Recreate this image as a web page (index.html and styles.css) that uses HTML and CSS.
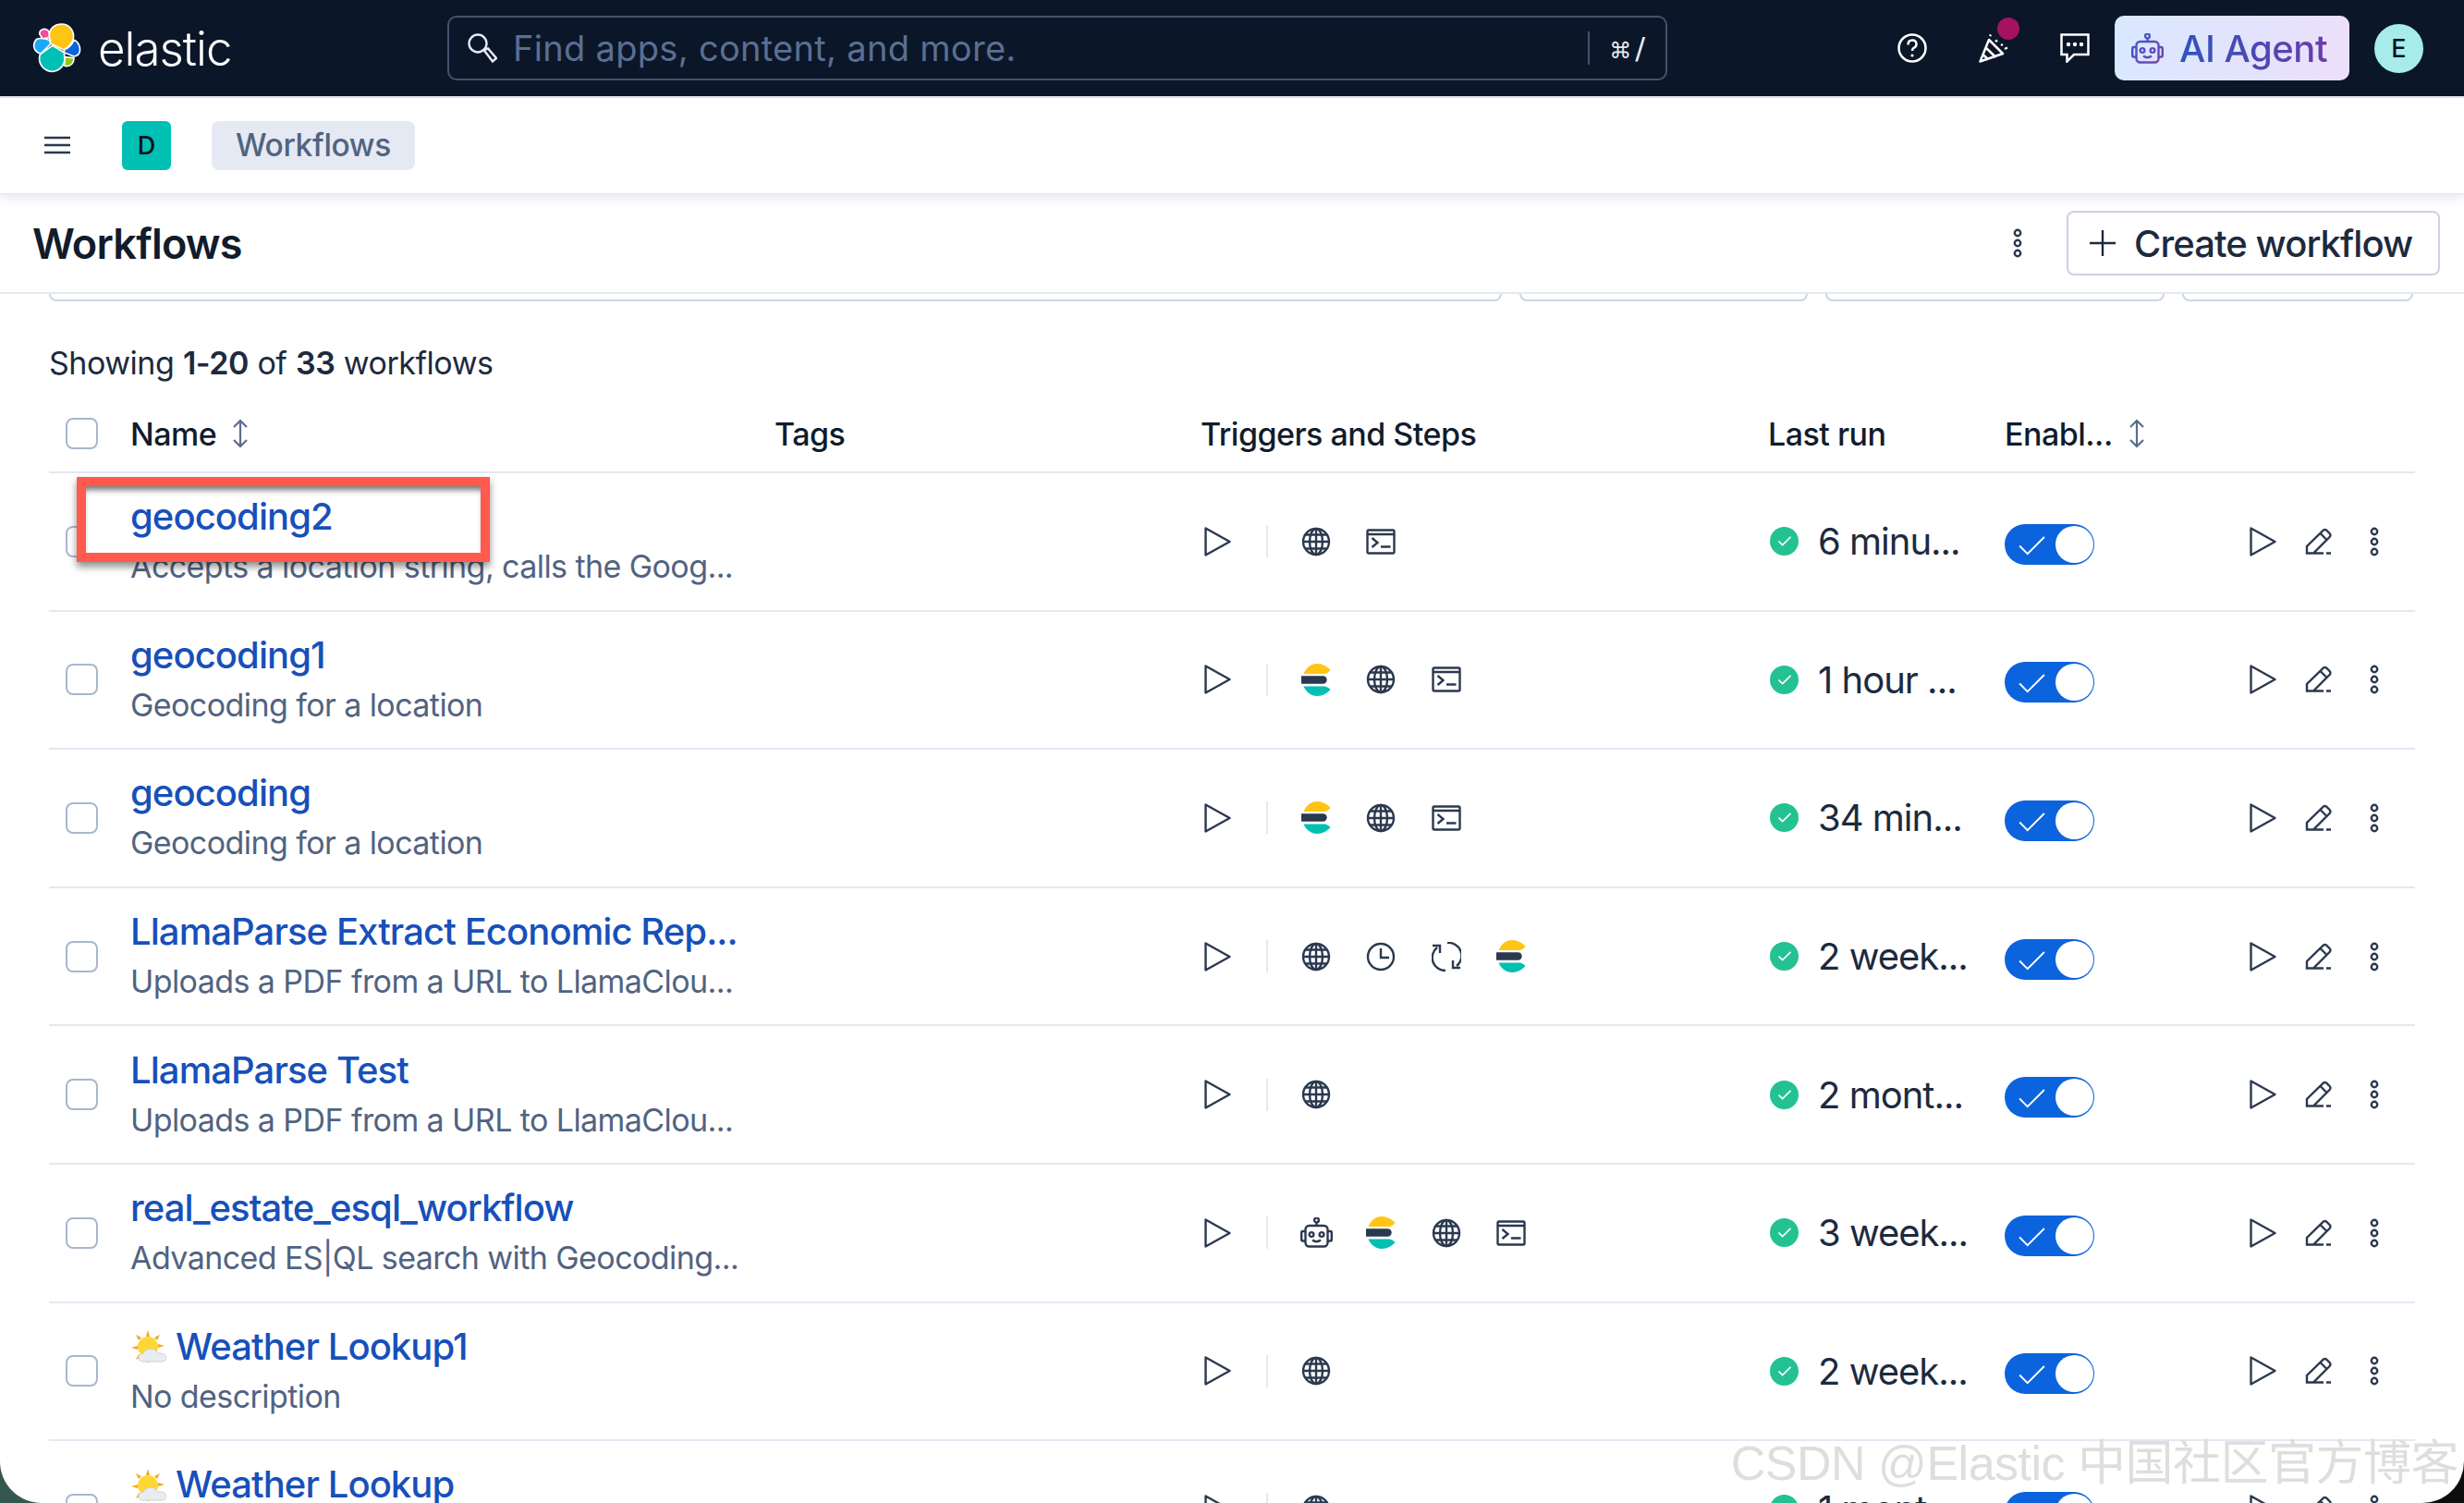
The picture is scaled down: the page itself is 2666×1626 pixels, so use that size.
FILE: index.html
```html
<!DOCTYPE html>
<html>
	<head>
		<meta charset="utf-8">
		<title>Workflows</title>
		<link rel="stylesheet" href="styles.css">
	</head>

	<body>
		<!-- shared icons -->
		<svg class="sprite" width="0" height="0">
			<defs>
				<linearGradient id="aiGrad" gradientUnits="userSpaceOnUse" x1="0" y1="0" x2="35" y2="33">
					<stop offset="0" stop-color="#3a5cc9"/>
					<stop offset="1" stop-color="#7b3fb0"/>
				</linearGradient>
			</defs>
			<symbol id="i-play" viewBox="0 0 32 32">
				<path d="M2.5 1.5 L28.5 16 L2.5 30.5 Z" stroke-linejoin="round"/>
			</symbol>
			<symbol id="i-globe" viewBox="0 0 32 32">
				<circle cx="16" cy="16" r="14"/>
				<ellipse cx="16" cy="16" rx="7" ry="14"/>
				<path d="M16 2 V30 M2 16 H30 M4.5 8.5 H27.5 M4.5 23.5 H27.5"/>
			</symbol>
			<symbol id="i-console" viewBox="0 0 32 32">
				<rect x="1.5" y="3.5" width="29" height="25" rx="1.5"/>
				<path d="M1.5 8 H30.5 M6.5 12 L12.5 17 L6.5 22 M16 21.5 H26.5"/>
			</symbol>
			<symbol id="i-clock" viewBox="0 0 32 32">
				<circle cx="16" cy="16" r="14"/>
				<path d="M16 7 V17 H25"/>
			</symbol>
			<symbol id="i-sync" viewBox="0 0 32 32">
				<path d="M15 31 A14 14 0 0 1 6 6 M1 4 H9 V12 M17 1 A14 14 0 0 1 27 26 M23 20 V28 H31"/>
			</symbol>
			<symbol id="i-robot" viewBox="0 0 35 33">
				<circle cx="17.5" cy="3" r="2.4"/>
				<path d="M17.5 5.5 V9"/>
				<rect x="5.5" y="9" width="24" height="22.5" rx="4"/>
				<path d="M5.5 15 H2.5 Q1.2 15 1.2 16.5 V24 Q1.2 25.5 2.5 25.5 H5.5 M29.5 15 H32.5 Q33.8 15 33.8 16.5 V24 Q33.8 25.5 32.5 25.5 H29.5"/>
				<circle cx="12" cy="18.5" r="2.4"/>
				<circle cx="23" cy="18.5" r="2.4"/>
				<path d="M13 24.5 Q17.5 28 22 24.5"/>
			</symbol>
			<symbol id="i-pen" viewBox="0 0 32 32">
				<path d="M3 28.5 V21 L21 3.5 Q22.5 2.5 24 3.5 L28 7.5 Q29 9 28 10.5 L10 28.5 Z M17.5 7 L24.5 14 M3 28.5 H21 M24 28.5 H29"/>
			</symbol>
			<symbol id="i-dots" viewBox="0 0 32 32">
				<circle cx="16" cy="5" r="3.2"/>
				<circle cx="16" cy="16" r="3.2"/>
				<circle cx="16" cy="27" r="3.2"/>
			</symbol>
			<symbol id="i-check" viewBox="0 0 30 22">
				<path d="M1 11 L10 20 L29 1"/>
			</symbol>
			<symbol id="i-sort" viewBox="0 0 20 32">
				<path d="M10 2 V30 M3 9 L10 2 L17 9 M3 23 L10 30 L17 23"/>
			</symbol>
			<symbol id="i-elastic" viewBox="0 0 32 35">
				<path class="fill-yellow" d="M2.5 11 C5 4.5 10.5 0 17 0 C23 0 28 3 31.5 7 L29.5 9 Q27.5 11 25 11 Z"/>
				<path class="fill-dark" d="M0 13.3 H23.5 A4.2 4.2 0 0 1 23.5 21.7 H0 Q-.8 17.5 0 13.3 Z"/>
				<path class="fill-teal" d="M2.5 24.5 H25 Q28 24.5 31.5 28 C28 32 23 35 17 35 C10.5 35 5 30.5 2.5 24.5 Z"/>
			</symbol>
			<symbol id="i-weather" viewBox="0 0 38 38">
				<path class="fill-orange" d="M18 0 L20 7 L16 7 Z M18 36 L16 30 L20 30 Z M0 19 L7 17 L7 21 Z M5 5 L11 8 L8 11 Z M31 5 L28 11 L25 8 Z M5 32 L8 26 L11 29 Z M36 17 L29 15 L29 19 Z"/>
				<circle class="fill-sun" cx="18" cy="18" r="11"/>
				<path class="fill-cloud" d="M13 34 Q8 34 8 29.5 Q8 25.5 13 25.5 Q15 20.5 21 20.5 Q27 20.5 28.5 25 Q37 24.5 38 29.5 Q38 34 33 34 Z"/>
			</symbol>
		</svg>

		<div class="window">
			<header class="topbar">
				<div class="brand">
					<svg class="brand-logo" viewBox="42 45 162 162">
						<g stroke="#fff" stroke-width="5" stroke-linejoin="round">
							<path fill="#f04e98" d="M68 80 C68 65 85 60 95 68 C100 72 102 78 100 92 L78 96 Z"/>
							<path fill="#1ba9f5" d="M60 97 C70 92 85 95 100 100 L105 112 L72 145 C55 140 48 125 50 115 C52 105 55 100 60 97 Z"/>
							<path fill="#0b64dd" d="M180 100 C195 105 203 125 198 140 C195 150 185 152 180 153 L147 140 L150 130 C165 125 175 112 180 100 Z"/>
							<path fill="#93c90e" d="M150 155 L180 158 C180 175 170 185 155 185 L148 182 C150 175 152 165 150 155 Z"/>
							<path fill="#fec514" d="M100 85 C100 60 120 48 140 48 C165 48 182 70 178 95 C176 110 160 125 147 132 L105 112 Z"/>
							<path fill="#00bfb3" d="M110 118 L148 140 L150 160 C150 185 130 202 110 202 C85 202 65 180 68 155 C68 150 70 147 72 145 Z"/>
						</g>
					</svg>
					<span class="brand-name">elastic</span>
				</div>

				<div class="search">
					<svg class="search-icon" viewBox="0 0 32 32">
						<circle cx="11" cy="11" r="9.5"/>
						<path d="M17.5 18 L22 16.5 L31 27 L27 30.5 Z"/>
					</svg>
					<span class="search-text">Find apps, content, and more.</span>
					<span class="search-sep"></span>
					<span class="search-keys">⌘<i>/</i></span>
				</div>

				<div class="top-actions">
					<svg class="top-icon" viewBox="0 0 32 32">
						<circle cx="16" cy="16" r="14.5"/>
						<path d="M11.5 12.5 Q11.5 7.5 16 7.5 Q20.5 7.5 20.5 12 Q20.5 14.5 18 15.5 Q16 16.5 16 19"/>
						<circle class="dot" cx="16" cy="24" r="1.6"/>
					</svg>
					<div class="party">
						<svg class="top-icon" viewBox="0 0 32 32">
							<path d="M1.5 30.5 L11 7 L26 22 Z M7 15 L18.5 26 M4 22.5 L10.5 28.5" stroke-linejoin="round"/>
							<path d="M12 3 L13 1.5 M18 9 L20 7.5 M24 13 L26 12 M28 17 L31 15.5"/>
						</svg>
						<span class="party-dot"></span>
					</div>
					<svg class="top-icon" viewBox="0 0 32 32">
						<path d="M1.5 1.5 H30.5 V23 H15 L7.5 30.5 V23 H1.5 Z"/>
						<circle class="dot" cx="9" cy="12" r="2.2"/>
						<circle class="dot" cx="16" cy="12" r="2.2"/>
						<circle class="dot" cx="23" cy="12" r="2.2"/>
					</svg>
					<button class="ai-btn">
						<svg class="ai-robot"><use href="#i-robot"/></svg>
						<span class="ai-text">AI Agent</span>
					</button>
					<span class="avatar">E</span>
				</div>
			</header>

			<nav class="crumbs">
				<svg class="burger" viewBox="0 0 28 20"><path d="M0 2 H28 M0 10 H28 M0 18 H28"/></svg>
				<span class="space">D</span>
				<span class="crumb">Workflows</span>
			</nav>

			<div class="page-head">
				<h1>Workflows</h1>
				<svg class="icon head-dots"><use href="#i-dots"/></svg>
				<button class="create"><svg class="plus" viewBox="0 0 28 28"><path d="M14 0 V28 M0 14 H28"/></svg>Create workflow</button>
			</div>

			<div class="filters">
				<span class="f1"></span>
				<span class="f2"></span>
				<span class="f3"></span>
				<span class="f4"></span>
			</div>

			<main class="content">
				<p class="count">Showing <b>1-20</b> of <b>33</b> workflows</p>

				<div class="row row-head">
					<span class="check"></span>
					<span class="th">Name <svg class="sort"><use href="#i-sort"/></svg></span>
					<span class="th">Tags</span>
					<span class="th">Triggers and Steps</span>
					<span class="th">Last run</span>
					<span class="th">Enabl... <svg class="sort sort-en"><use href="#i-sort"/></svg></span>
					<span></span>
				</div>

				<div class="row">
					<span class="check"></span>
					<div class="name">
						<a class="title raised">geocoding2</a>
						<div class="desc">Accepts a location string, calls the Goog...</div>
					</div>
					<div></div>
					<div class="steps">
						<svg class="icon"><use href="#i-play"/></svg><span class="sep"></span>
						<svg class="icon"><use href="#i-globe"/></svg>
						<svg class="icon"><use href="#i-console"/></svg>
					</div>
					<div class="run"><span class="ok"><svg><use href="#i-check"/></svg></span>6 minu...</div>
					<div class="toggle"><svg><use href="#i-check"/></svg><span class="knob"></span></div>
					<div class="acts">
						<svg class="icon"><use href="#i-play"/></svg>
						<svg class="icon"><use href="#i-pen"/></svg>
						<svg class="icon"><use href="#i-dots"/></svg>
					</div>
				</div>

				<div class="row">
					<span class="check"></span>
					<div class="name">
						<a class="title">geocoding1</a>
						<div class="desc">Geocoding for a location</div>
					</div>
					<div></div>
					<div class="steps">
						<svg class="icon"><use href="#i-play"/></svg><span class="sep"></span>
						<svg class="icon-el"><use href="#i-elastic"/></svg>
						<svg class="icon"><use href="#i-globe"/></svg>
						<svg class="icon"><use href="#i-console"/></svg>
					</div>
					<div class="run"><span class="ok"><svg><use href="#i-check"/></svg></span>1 hour ...</div>
					<div class="toggle"><svg><use href="#i-check"/></svg><span class="knob"></span></div>
					<div class="acts">
						<svg class="icon"><use href="#i-play"/></svg>
						<svg class="icon"><use href="#i-pen"/></svg>
						<svg class="icon"><use href="#i-dots"/></svg>
					</div>
				</div>

				<div class="row">
					<span class="check"></span>
					<div class="name">
						<a class="title">geocoding</a>
						<div class="desc">Geocoding for a location</div>
					</div>
					<div></div>
					<div class="steps">
						<svg class="icon"><use href="#i-play"/></svg><span class="sep"></span>
						<svg class="icon-el"><use href="#i-elastic"/></svg>
						<svg class="icon"><use href="#i-globe"/></svg>
						<svg class="icon"><use href="#i-console"/></svg>
					</div>
					<div class="run"><span class="ok"><svg><use href="#i-check"/></svg></span>34 min...</div>
					<div class="toggle"><svg><use href="#i-check"/></svg><span class="knob"></span></div>
					<div class="acts">
						<svg class="icon"><use href="#i-play"/></svg>
						<svg class="icon"><use href="#i-pen"/></svg>
						<svg class="icon"><use href="#i-dots"/></svg>
					</div>
				</div>

				<div class="row">
					<span class="check"></span>
					<div class="name">
						<a class="title">LlamaParse Extract Economic Rep...</a>
						<div class="desc">Uploads a PDF from a URL to LlamaClou...</div>
					</div>
					<div></div>
					<div class="steps">
						<svg class="icon"><use href="#i-play"/></svg><span class="sep"></span>
						<svg class="icon"><use href="#i-globe"/></svg>
						<svg class="icon"><use href="#i-clock"/></svg>
						<svg class="icon"><use href="#i-sync"/></svg>
						<svg class="icon-el"><use href="#i-elastic"/></svg>
					</div>
					<div class="run"><span class="ok"><svg><use href="#i-check"/></svg></span>2 week...</div>
					<div class="toggle"><svg><use href="#i-check"/></svg><span class="knob"></span></div>
					<div class="acts">
						<svg class="icon"><use href="#i-play"/></svg>
						<svg class="icon"><use href="#i-pen"/></svg>
						<svg class="icon"><use href="#i-dots"/></svg>
					</div>
				</div>

				<div class="row">
					<span class="check"></span>
					<div class="name">
						<a class="title">LlamaParse Test</a>
						<div class="desc">Uploads a PDF from a URL to LlamaClou...</div>
					</div>
					<div></div>
					<div class="steps">
						<svg class="icon"><use href="#i-play"/></svg><span class="sep"></span>
						<svg class="icon"><use href="#i-globe"/></svg>
					</div>
					<div class="run"><span class="ok"><svg><use href="#i-check"/></svg></span>2 mont...</div>
					<div class="toggle"><svg><use href="#i-check"/></svg><span class="knob"></span></div>
					<div class="acts">
						<svg class="icon"><use href="#i-play"/></svg>
						<svg class="icon"><use href="#i-pen"/></svg>
						<svg class="icon"><use href="#i-dots"/></svg>
					</div>
				</div>

				<div class="row">
					<span class="check"></span>
					<div class="name">
						<a class="title">real_estate_esql_workflow</a>
						<div class="desc">Advanced ES|QL search with Geocoding...</div>
					</div>
					<div></div>
					<div class="steps">
						<svg class="icon"><use href="#i-play"/></svg><span class="sep"></span>
						<svg class="icon-robot"><use href="#i-robot"/></svg>
						<svg class="icon-el"><use href="#i-elastic"/></svg>
						<svg class="icon"><use href="#i-globe"/></svg>
						<svg class="icon"><use href="#i-console"/></svg>
					</div>
					<div class="run"><span class="ok"><svg><use href="#i-check"/></svg></span>3 week...</div>
					<div class="toggle"><svg><use href="#i-check"/></svg><span class="knob"></span></div>
					<div class="acts">
						<svg class="icon"><use href="#i-play"/></svg>
						<svg class="icon"><use href="#i-pen"/></svg>
						<svg class="icon"><use href="#i-dots"/></svg>
					</div>
				</div>

				<div class="row">
					<span class="check"></span>
					<div class="name">
						<a class="title"><svg class="weather"><use href="#i-weather"/></svg>Weather Lookup1</a>
						<div class="desc">No description</div>
					</div>
					<div></div>
					<div class="steps">
						<svg class="icon"><use href="#i-play"/></svg><span class="sep"></span>
						<svg class="icon"><use href="#i-globe"/></svg>
					</div>
					<div class="run"><span class="ok"><svg><use href="#i-check"/></svg></span>2 week...</div>
					<div class="toggle"><svg><use href="#i-check"/></svg><span class="knob"></span></div>
					<div class="acts">
						<svg class="icon"><use href="#i-play"/></svg>
						<svg class="icon"><use href="#i-pen"/></svg>
						<svg class="icon"><use href="#i-dots"/></svg>
					</div>
				</div>

				<div class="row">
					<span class="check"></span>
					<div class="name">
						<a class="title"><svg class="weather"><use href="#i-weather"/></svg>Weather Lookup</a>
						<div class="desc"></div>
					</div>
					<div></div>
					<div class="steps">
						<svg class="icon"><use href="#i-play"/></svg><span class="sep"></span>
						<svg class="icon"><use href="#i-globe"/></svg>
					</div>
					<div class="run"><span class="ok"><svg><use href="#i-check"/></svg></span>1 mont...</div>
					<div class="toggle"><svg><use href="#i-check"/></svg><span class="knob"></span></div>
					<div class="acts">
						<svg class="icon"><use href="#i-play"/></svg>
						<svg class="icon"><use href="#i-pen"/></svg>
						<svg class="icon"><use href="#i-dots"/></svg>
					</div>
				</div>
			</main>

			<!-- annotation and watermark sit over the table -->
			<div class="callout"></div>
			<div class="watermark">CSDN @Elastic 中国社区官方博客</div>
		</div>
	</body>
</html>
```

FILE: styles.css
```css
* {
	box-sizing: border-box;
}

html, body {
	margin: 0;
	height: 100%;
}

body {
	background: linear-gradient(90deg, #33594f 0 50%, #0d0d0d 50% 100%);
	font-family: "Inter", "Liberation Sans", sans-serif;
	color: #1d2a3e;
	overflow: hidden;
}

.sprite {
	position: absolute;
}

.window {
	position: relative;
	height: 1626px;
	background: #fff;
	border-radius: 0 0 45px 45px;
	overflow: hidden;
}

/* top bar */
.topbar {
	display: flex;
	align-items: center;
	height: 106px;
	padding: 0 44px 0 34px;
	background: #0b1628;
	border-bottom: 2px solid #e3e8f2;
}

.brand {
	display: flex;
	align-items: center;
	gap: 18px;
	width: 450px;
}

.brand-logo {
	width: 54px;
	height: 54px;
}

.brand-name {
	color: #fff;
	font-size: 51px;
	font-weight: 300;
	letter-spacing: -1px;
}

.search {
	display: flex;
	align-items: center;
	width: 1320px;
	height: 70px;
	padding: 0 22px 0 20px;
	border: 2px solid #43526e;
	border-radius: 10px;
}

.search-icon {
	width: 32px;
	height: 32px;
	fill: none;
	stroke: #e6ebf3;
	stroke-width: 2.4;
}

.search-text {
	margin-left: 17px;
	color: #5a6f92;
	font-size: 38px;
	letter-spacing: .3px;
}

.search-sep {
	width: 2px;
	height: 36px;
	margin-left: auto;
	background: #43526e;
}

.search-keys {
	margin-left: 21px;
	color: #e6ebf3;
	font-family: "DejaVu Sans", sans-serif;
	font-size: 24px;
}

.search-keys i {
	margin-left: 4px;
	font-size: 32px;
	font-style: normal;
}

.top-actions {
	display: flex;
	align-items: center;
	gap: 56px;
	margin-left: auto;
}

.top-icon {
	display: block;
	width: 32px;
	height: 32px;
	fill: none;
	stroke: #fff;
	stroke-width: 2.5;
}

.top-icon .dot {
	fill: #fff;
	stroke: none;
}

.party {
	position: relative;
}

.party-dot {
	position: absolute;
	top: -17px;
	left: 20px;
	width: 24px;
	height: 24px;
	border-radius: 50%;
	background: #a6125f;
}

.ai-btn {
	display: flex;
	align-items: center;
	gap: 17px;
	width: 254px;
	height: 70px;
	margin-left: -29px;
	padding: 0 0 0 18px;
	border: 0;
	border-radius: 10px;
	background: linear-gradient(100deg, #d9e8ff, #ecdffb);
	font-family: inherit;
}

.ai-robot {
	width: 35px;
	height: 33px;
	fill: none;
	stroke: url(#aiGrad);
	stroke-width: 2.4;
}

.ai-text {
	font-size: 40px;
	font-weight: 500;
	letter-spacing: -.012em;
	background: linear-gradient(90deg, #2e55bd, #6b3ca8);
	-webkit-background-clip: text;
	background-clip: text;
	color: transparent;
}

.avatar {
	display: flex;
	align-items: center;
	justify-content: center;
	width: 53px;
	height: 53px;
	margin-left: -29px;
	border-radius: 50%;
	background: #a6edea;
	color: #07101f;
	font-size: 27px;
	font-weight: 500;
}

/* breadcrumbs */
.crumbs {
	position: relative;
	z-index: 1;
	display: flex;
	align-items: center;
	height: 104px;
	padding: 0 0 1px 48px;
	background: #fff;
	border-bottom: 1px solid #e3e8f2;
	box-shadow: 0 3px 12px rgba(60, 80, 130, .16);
}

.burger {
	width: 28px;
	height: 20px;
	fill: none;
	stroke: #2b394f;
	stroke-width: 2.6;
}

.space {
	display: flex;
	align-items: center;
	justify-content: center;
	width: 53px;
	height: 53px;
	margin-left: 56px;
	border-radius: 6px;
	background: #00bfb3;
	color: #07101f;
	font-size: 27px;
	font-weight: 500;
}

.crumb {
	display: flex;
	align-items: center;
	height: 53px;
	margin-left: 44px;
	padding: 0 26px;
	border-radius: 8px;
	background: #e5e9f3;
	color: #516381;
	font-size: 33.5px;
	font-weight: 500;
	letter-spacing: -.01em;
}

/* page title */
.page-head {
	display: flex;
	align-items: center;
	height: 108px;
	padding: 0 26px 0 35px;
	border-bottom: 2px solid #e3e8f2;
}

h1 {
	margin: 0;
	color: #111c2c;
	font-size: 45px;
	font-weight: 600;
	letter-spacing: -.017em;
}

.head-dots {
	margin-left: auto;
}

.create {
	display: flex;
	align-items: center;
	gap: 20px;
	width: 404px;
	height: 70px;
	margin-left: 37px;
	padding-left: 23px;
	border: 2px solid #cad3e2;
	border-radius: 8px;
	background: #fff;
	color: #1d2a3e;
	font-family: inherit;
	font-size: 40px;
	font-weight: 500;
	letter-spacing: -.023em;
}

.plus {
	width: 28px;
	height: 28px;
	fill: none;
	stroke: #1d2a3e;
	stroke-width: 2.4;
}

/* tail of the scrolled away filter bar */
.filters {
	display: flex;
	gap: 19px;
	height: 8px;
	padding: 0 53px;
	overflow: hidden;
}

.filters span {
	flex: none;
	height: 40px;
	margin-top: -32px;
	border: 2px solid #ccd5e4;
	border-radius: 8px;
}

.f1 { width: 1572px; }
.f2 { width: 312px; }
.f3 { width: 367px; }
.f4 { width: 250px; }

/* table */
.content {
	padding: 0 53px;
}

.count {
	display: flex;
	gap: .28em;
	height: 102px;
	margin: 0;
	padding-top: 47px;
	font-size: 34px;
	line-height: 40px;
	letter-spacing: -.014em;
}

.count b {
	font-weight: 600;
}

.row {
	display: grid;
	grid-template-columns: 88px 697px 461px 614px 256px 265px 179px;
	align-items: center;
	height: 149.6px;
	border-bottom: 2px solid #e3e8f2;
}

.row-head {
	height: 84px;
}

.check {
	width: 35px;
	height: 34px;
	margin-left: 18px;
	border: 2px solid #a8b6d0;
	border-radius: 8px;
	background: #fff;
}

.th {
	display: flex;
	align-items: center;
	gap: 16px;
	color: #111c2c;
	font-size: 34px;
	font-weight: 500;
	letter-spacing: -.015em;
}

.sort {
	width: 20px;
	height: 32px;
	fill: none;
	stroke: #5a6d8c;
	stroke-width: 2.2;
}

.title {
	display: flex;
	align-items: center;
	height: 55px;
	padding-bottom: 4px;
	color: #1750ba;
	font-size: 40px;
	font-weight: 500;
	letter-spacing: -.023em;
}

.raised {
	position: relative;
	z-index: 3;
	width: max-content;
}

.weather {
	width: 38px;
	height: 38px;
	margin: 4px 10px 0 1px;
}

.desc {
	height: 50px;
	color: #516381;
	font-size: 34px;
	line-height: 50px;
	letter-spacing: -.017em;
	white-space: nowrap;
}

.steps {
	display: flex;
	align-items: center;
	gap: 38.4px;
	padding-left: 3px;
}

.icon {
	display: block;
	width: 32px;
	height: 32px;
	fill: none;
	stroke: #2b394f;
	stroke-width: 2.4;
}

.icon-el {
	display: block;
	width: 32px;
	height: 35px;
}

.icon-robot {
	display: block;
	width: 35px;
	height: 33px;
	margin: 0 -1.5px;
	fill: none;
	stroke: #2b394f;
	stroke-width: 2.4;
}

.fill-yellow { fill: #fec514; }
.fill-dark { fill: #2b394f; }
.fill-teal { fill: #00bfb3; }
.fill-orange { fill: #f5a623; }
.fill-sun { fill: #fdd835; }
.fill-cloud { fill: #e9edf2; stroke: #c9d0da; stroke-width: 1; }

.sep {
	width: 2px;
	height: 35px;
	margin: 0 -2.4px 0 -2.4px;
	background: #e3e8f2;
}

.run {
	display: flex;
	align-items: center;
	gap: 21px;
	padding-left: 2px;
	font-size: 40px;
	letter-spacing: -.025em;
	white-space: nowrap;
}

.ok {
	display: flex;
	align-items: center;
	justify-content: center;
	width: 31px;
	height: 31px;
	border-radius: 50%;
	background: #24c292;
}

.ok svg {
	width: 14px;
	height: 11px;
	fill: none;
	stroke: #fff;
	stroke-width: 3.5;
}

.toggle {
	position: relative;
	width: 97px;
	height: 44px;
	margin-top: 6px;
	border-radius: 22px;
	background: #0b64dd;
}

.toggle svg {
	position: absolute;
	top: 13px;
	left: 15px;
	width: 29px;
	height: 21px;
	fill: none;
	stroke: #fff;
	stroke-width: 2;
}

.knob {
	position: absolute;
	top: 2px;
	right: 1px;
	width: 41px;
	height: 40px;
	border-radius: 50%;
	background: #fff;
}

.acts {
	display: flex;
	align-items: center;
	gap: 28px;
	margin-left: -1px;
}

/* red annotation box drawn on the screenshot */
.callout {
	position: absolute;
	z-index: 2;
	top: 516px;
	left: 83px;
	width: 447px;
	height: 92px;
	border: 10px solid #ff5a4d;
	background: #fff;
	box-shadow: 0 5px 8px rgba(0, 0, 0, .45), inset 0 7px 6px -3px rgba(0, 0, 0, .55);
}

.watermark {
	position: absolute;
	z-index: 4;
	top: 1541px;
	right: 6px;
	color: #dedede;
	font-family: "Liberation Sans", "Noto Sans CJK SC", sans-serif;
	font-size: 52px;
	letter-spacing: -.5px;
	white-space: nowrap;
}
```
